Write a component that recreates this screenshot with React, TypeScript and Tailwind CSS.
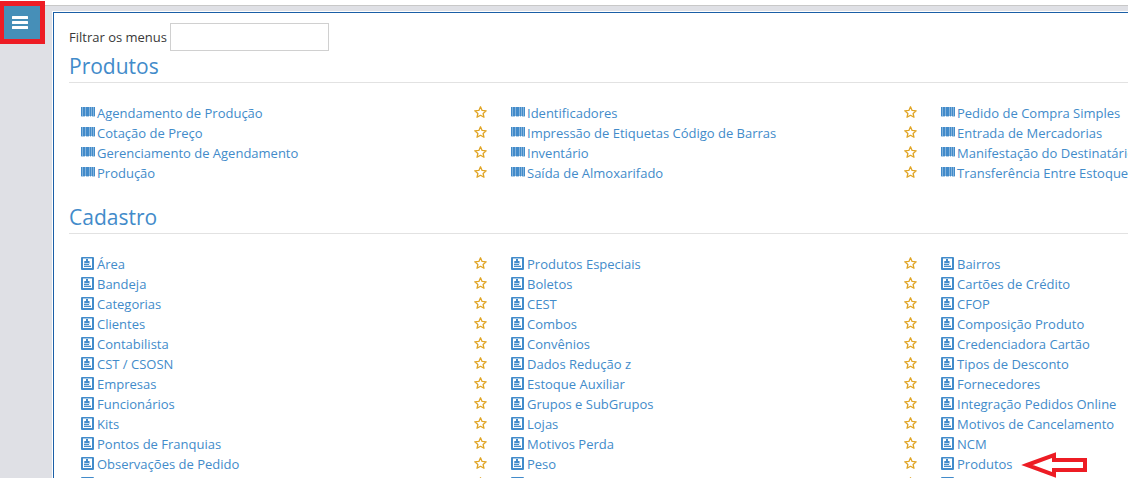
import React from 'react';

type IconKind = 'barcode' | 'card';

function BarcodeIcon() {
  return (
    <svg className="h-[10px] w-[14px] shrink-0" viewBox="0 0 14 10" fill="#428bca" aria-hidden="true">
      <path opacity=".65" d="M0 0h14v9H0z" />
      <path d="M0 0h1v9H0zM2 0h2v9H2zM5 0h3v9H5zM9 0h1v9H9zM11 0h1v9h-1zM13 0h1v9h-1z" />
      <path opacity=".4" d="M0 9h4v1H0zM5 9h3v1H5zM9 9h1v1H9zM11 9h3v1h-3z" />
    </svg>
  );
}

function CardIcon() {
  return (
    <svg className="h-[13px] w-[13px] shrink-0" viewBox="0 0 13 13" fill="#428bca" aria-hidden="true">
      <path
        fillRule="evenodd"
        d="M1 0h11q1 0 1 1v11q0 1-1 1H1q-1 0-1-1V1q0-1 1-1zM2 1.5v9.5h9V1.5z"
      />
      <path d="M5 2h2v2h1.5v2H3.3V4H5zM3 7h5v1H3zM3 9h7v1H3z" />
      <path opacity=".35" d="M3 6h6v1H3zM3 8h7v1H3z" />
    </svg>
  );
}

function StarIcon() {
  return (
    <svg className="h-[13px] w-[13px]" viewBox="0 0 13 13" fill="none" stroke="#e0a526" strokeWidth="1.3" strokeLinejoin="round" aria-hidden="true">
      <path d="M6.5 .8l1.6 3.6 4.1.4-3.1 2.7.9 3.8-3.5-2L3 11.3l.9-3.8L.8 4.8l4.1-.4z" />
    </svg>
  );
}

interface SectionProps {
  title: string;
  icon: IconKind;
  rows: string[][];
  more?: boolean;
}

function Section({ title, icon, rows, more = false }: SectionProps) {
  const Icon = icon === 'barcode' ? BarcodeIcon : CardIcon;
  const all = more ? [...rows, ['', '', '']] : rows;
  return (
    <section className="mb-[19px]">
      <h2 className="mb-5 h-8 border-b border-[#e2e2e2] text-[21px] leading-[30px] text-[#428bca]">{title}</h2>
      <ul className="grid grid-cols-[repeat(3,430px)] pl-3">
        {all.flatMap((row, r) =>
          row.map((name, c) => (
            <li key={`${r}-${c}`} className="flex h-5 items-center">
              <a href="#" className="flex items-center gap-[2px] whitespace-nowrap text-[#428bca]">
                <span className="flex h-5 w-[14px] items-center pb-[2px]">
                  <Icon />
                </span>
                {name}
              </a>
              {name === 'Produtos' && (
                <svg className="ml-2 h-7 w-[66px]" viewBox="0 0 66 28" fill="none" stroke="#ed1c24" strokeWidth="4" aria-hidden="true">
                  <path d="M6 15L33 5v5h31v10H33v5z" />
                </svg>
              )}
              <button type="button" aria-label="Favorito" className="mr-6 ml-auto flex h-5 items-center pb-[2px]">
                <StarIcon />
              </button>
            </li>
          )),
        )}
      </ul>
    </section>
  );
}

const produtos = [
  ['Agendamento de Produção', 'Identificadores', 'Pedido de Compra Simples'],
  ['Cotação de Preço', 'Impressão de Etiquetas Código de Barras', 'Entrada de Mercadorias'],
  ['Gerenciamento de Agendamento', 'Inventário', 'Manifestação do Destinatário'],
  ['Produção', 'Saída de Almoxarifado', 'Transferência Entre Estoques'],
];

const cadastro = [
  ['Área', 'Produtos Especiais', 'Bairros'],
  ['Bandeja', 'Boletos', 'Cartões de Crédito'],
  ['Categorias', 'CEST', 'CFOP'],
  ['Clientes', 'Combos', 'Composição Produto'],
  ['Contabilista', 'Convênios', 'Credenciadora Cartão'],
  ['CST / CSOSN', 'Dados Redução z', 'Tipos de Desconto'],
  ['Empresas', 'Estoque Auxiliar', 'Fornecedores'],
  ['Funcionários', 'Grupos e SubGrupos', 'Integração Pedidos Online'],
  ['Kits', 'Lojas', 'Motivos de Cancelamento'],
  ['Pontos de Franquias', 'Motivos Perda', 'NCM'],
  ['Observações de Pedido', 'Peso', 'Produtos'],
];

export default function App() {
  return (
    <div className="relative flex h-screen flex-col overflow-hidden bg-white font-['Open_Sans',sans-serif] text-[13px] leading-5">
      <div className="h-[5px] shrink-0" />
      <div className="flex min-h-0 flex-1 border-t border-[#c8c8c8] bg-[#dfe0e5]">
        <aside className="w-[52px] shrink-0" />
        <main className="mt-[5px] min-w-0 flex-1 overflow-hidden border-t border-l border-white bg-white">
          <div className="h-full border-t border-l border-[#1b5fa6] pt-[10px] pl-[15px]">
            <div className="flex h-7 items-center gap-[3px] text-[#393939]">
              <label htmlFor="filtro">Filtrar os menus</label>
              <input id="filtro" type="text" className="h-7 w-[159px] border border-[#d0d0d0] bg-white px-1 outline-none" />
            </div>
            <Section title="Produtos" icon="barcode" rows={produtos} />
            <Section title="Cadastro" icon="card" rows={cadastro} more />
          </div>
        </main>
      </div>
      <button
        type="button"
        aria-label="Menu"
        className="absolute top-px left-0 flex h-[43px] w-[45px] items-center justify-center border-[5px] border-l-4 border-[#ed1c24] bg-[#468fb8] pr-1"
      >
        <svg className="h-[13px] w-4" viewBox="0 0 16 13" fill="white" aria-hidden="true">
          <rect width="16" height="3" rx=".5" />
          <rect y="5" width="16" height="3" rx=".5" />
          <rect y="10" width="16" height="3" rx=".5" />
        </svg>
      </button>
    </div>
  );
}
